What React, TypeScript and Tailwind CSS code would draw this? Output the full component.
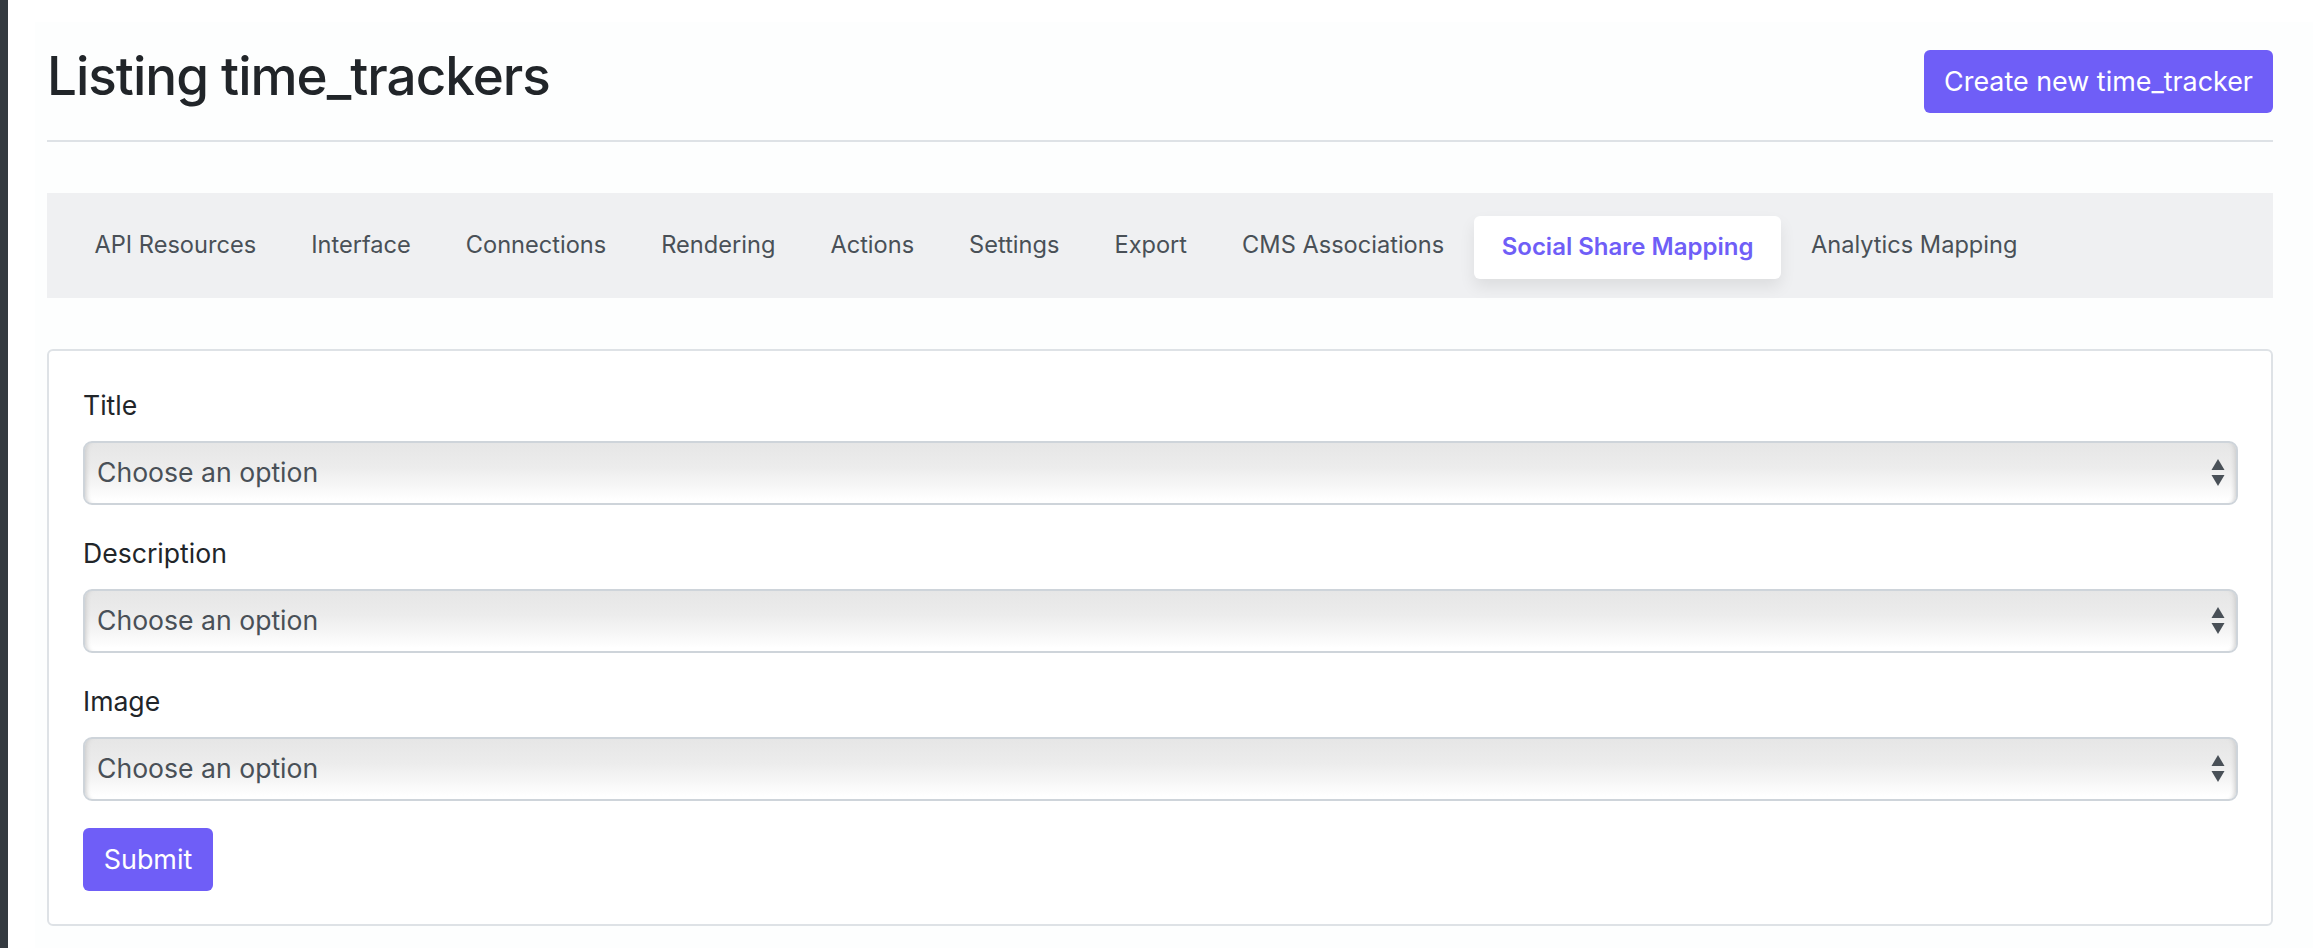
import { ChangeEvent, useState } from "react";

const tabs = [
  "API Resources",
  "Interface",
  "Connections",
  "Rendering",
  "Actions",
  "Settings",
  "Export",
  "CMS Associations",
  "Social Share Mapping",
  "Analytics Mapping",
];

const fields = ["Title", "Description", "Image"];

function SelectField({ label }: { label: string }) {
  const [value, setValue] = useState("");
  return (
    <div>
      <label className="block h-[36px] mb-[18px] text-[26.6px] leading-[36px] text-[#212529]">{label}</label>
      <div className="relative">
        {/* native mac select look, faked with gradient + inset shadows */}
        <select
          value={value}
          onChange={(e: ChangeEvent<HTMLSelectElement>) => setValue(e.target.value)}
          className="block w-full h-[64px] pl-[12px] pr-[40px] appearance-none rounded-[9px] border-2 border-[#ced4da] text-[26.6px] text-[#495057] outline-none bg-[linear-gradient(180deg,#e6e6e6_0%,#ececec_40%,#f6f6f6_70%,#ffffff_95%)] shadow-[inset_6px_0_5px_-5px_#c8c8c8,inset_-6px_0_5px_-5px_#c8c8c8]"
        >
          <option value="">Choose an option</option>
        </select>
        <svg className="absolute right-[13px] top-[18px] pointer-events-none" width="14" height="28" viewBox="0 0 14 28">
          <path d="M7 0 L13.5 11 H0.5 Z" fill="#495057" />
          <path d="M0.5 16 H13.5 L7 27 Z" fill="#495057" />
        </svg>
      </div>
    </div>
  );
}

export default function App() {
  return (
    <div className="flex min-h-screen bg-white font-['Inter',sans-serif]">
      <div className="w-[8px] shrink-0 bg-[#343a40]" />
      <div className="flex flex-1 pt-[22px] pl-[27px] pr-[5px]">
        <main className="flex-1 bg-[#fdfefe] pl-[12px] pr-[40px]">
          <div className="flex items-start justify-between pt-[28px] pb-[27px] border-b-2 border-[#dee2e6]">
            <h1 className="text-[53px] leading-[52px] font-medium tracking-[-1px] text-[#212529]">Listing time_trackers</h1>
            <button className="h-[63px] px-[20px] rounded-[6px] bg-[#6f5ef7] text-[26.9px] text-white">Create new time_tracker</button>
          </div>

          <nav className="mt-[51px] flex items-center h-[105px] pl-[20px] pr-[24px] pb-[2px] bg-[#eff0f2]">
            {tabs.map((t) =>
              t === "Social Share Mapping" ? (
                <a key={t} className="flex items-center h-[63px] px-[27.5px] mx-[2.5px] mt-[5px] rounded-[6px] bg-white text-[24px] font-semibold text-[#6f5ef7] shadow-[0_8px_16px_rgba(0,0,0,0.08)] whitespace-nowrap">
                  {t}
                </a>
              ) : (
                <a key={t} className="px-[27.5px] text-[23.6px] text-[#495057] whitespace-nowrap">
                  {t}
                </a>
              ),
            )}
          </nav>

          <form className="mt-[51px] h-[577px] bg-white border-2 border-[#dee2e6] rounded-[6px] pt-[36px] pl-[34px] pr-[33px]">
            <div className="flex flex-col gap-[30px] mb-[27px]">
              {fields.map((f) => (
                <SelectField key={f} label={f} />
              ))}
            </div>
            <button type="button" className="h-[63px] w-[130px] rounded-[6px] bg-[#6f5ef7] text-[26.9px] text-white">
              Submit
            </button>
          </form>
        </main>
      </div>
    </div>
  );
}
